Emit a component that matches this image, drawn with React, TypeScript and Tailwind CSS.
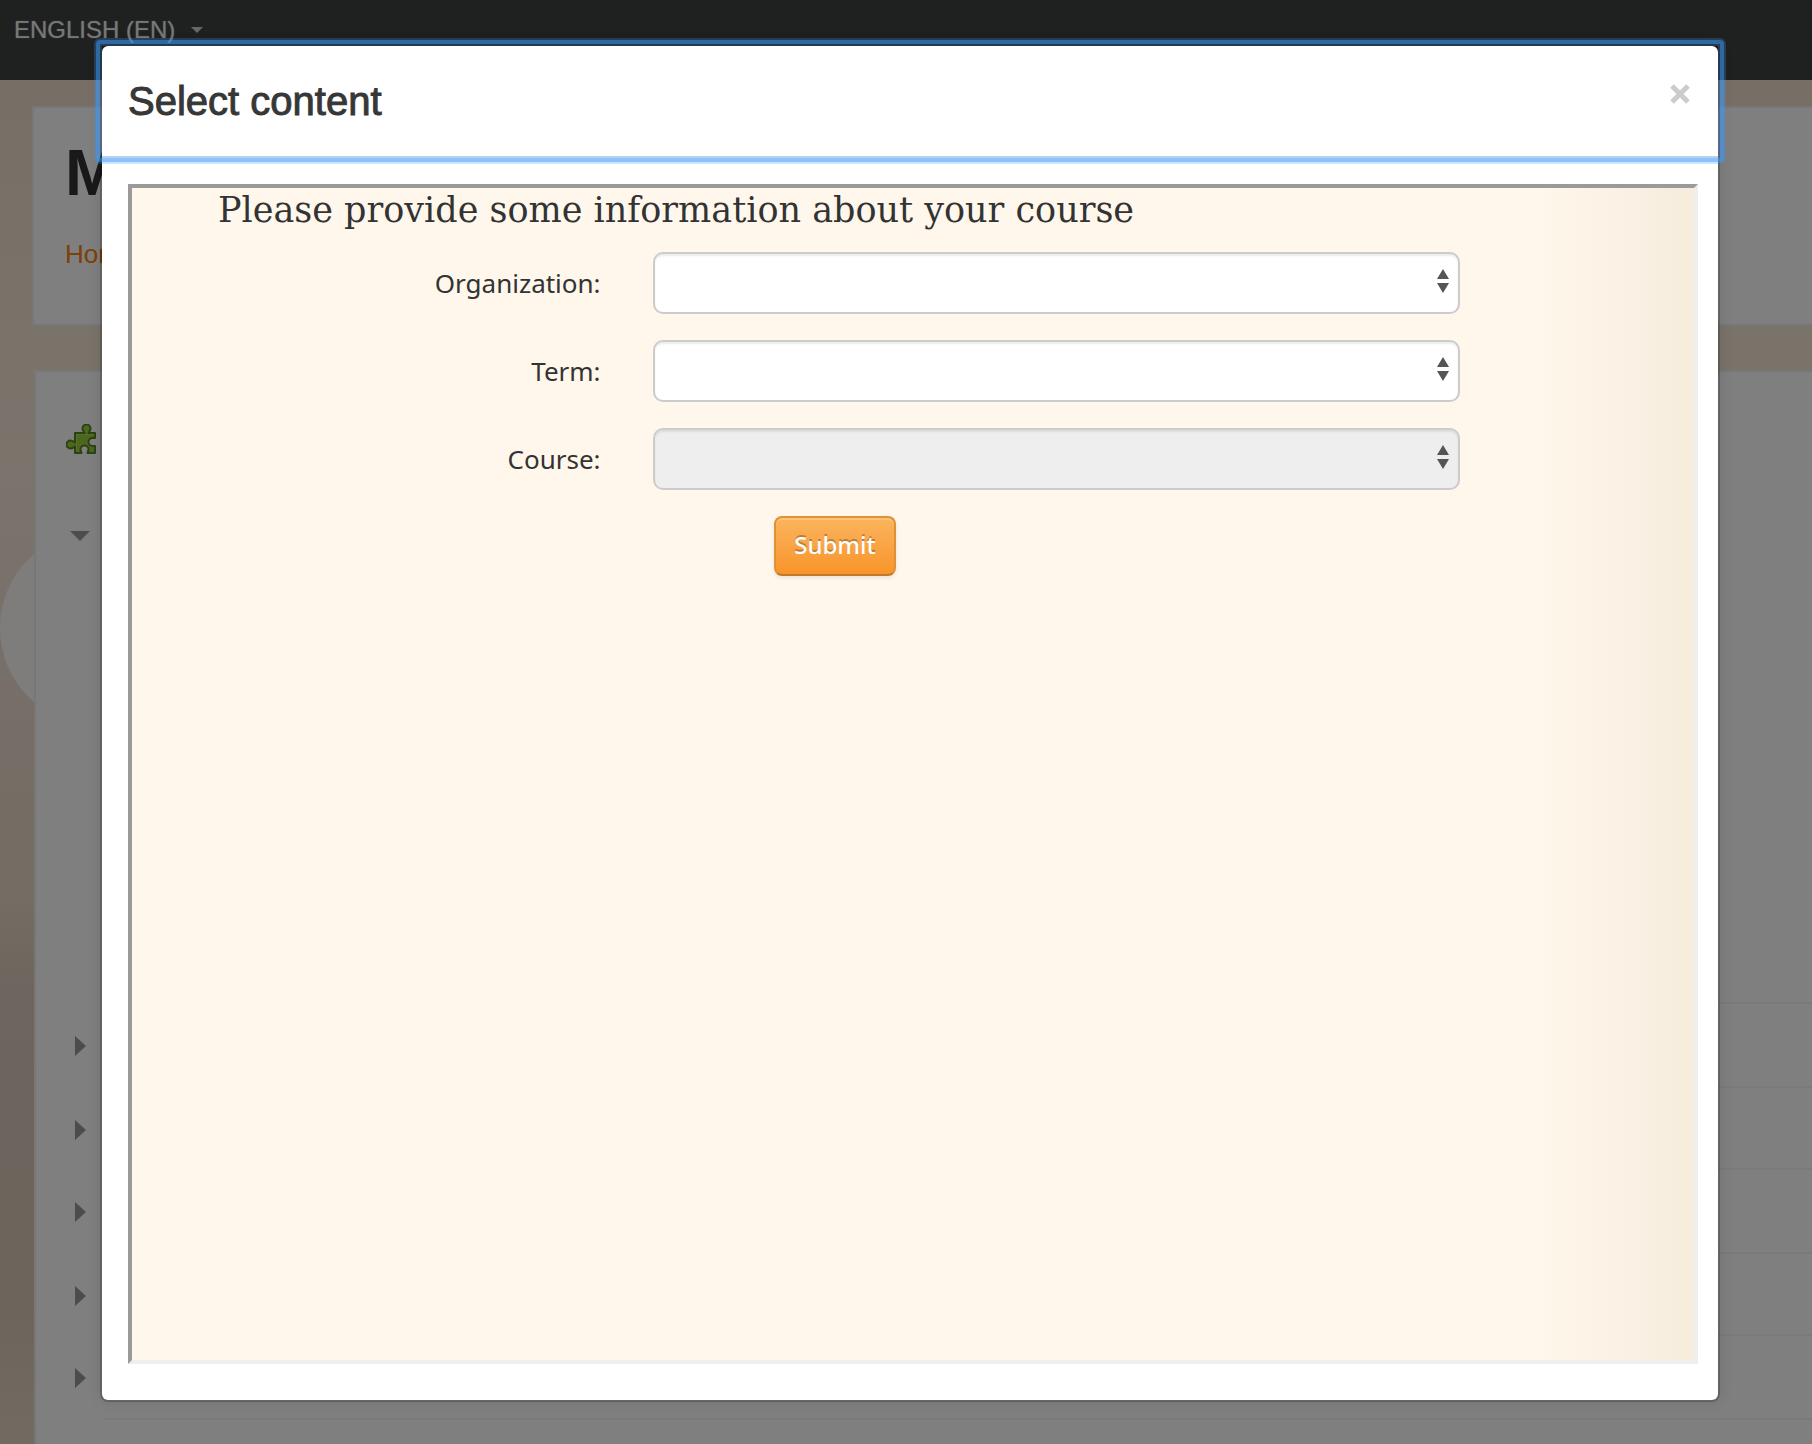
import React from "react";

const rowHeights = ["h-[84px]", "h-[82px]", "h-[84px]", "h-[82px]", "h-[84px]"];

function Puzzle() {
  return (
    <svg viewBox="0 0 30 30" className="block h-[30px] w-[30px]" aria-hidden="true">
      <path
        d="M9 9h9.500c0-1-2-2-2-4.500a4 4 0 0 1 8 0c0 2.500-2 3.500-2 4.500H29v5h-2.500a4 4 0 0 0 0 8H29v7h-7.500c0-1 1-2 1-3.500a4 4 0 0 0-8 0c0 1.500 1 2.500 1 3.500H9v-6.500c-1 0-2 2-4.500 2a4 4 0 0 1 0-8c2.500 0 3.500 2 4.500 2z"
        fill="#9cce3c"
        stroke="#588424"
        strokeWidth="2"
        strokeLinejoin="round"
      />
      <path d="M10.500 27.500V10.500h17" fill="none" stroke="#b4dc60" strokeWidth="1" />
    </svg>
  );
}

function SelectField({ id, label, disabled }: { id: string; label: string; disabled?: boolean }) {
  return (
    <div className="grid grid-cols-[30%_1fr_15%] items-center">
      <label htmlFor={id} className="text-right text-[26px] leading-8 text-[#333]">
        {label}
      </label>
      <div className="relative ml-[52px]">
        <select
          id={id}
          disabled={disabled}
          className="block h-[62px] w-full appearance-none rounded-[10px] border-2 border-[#ccc] bg-white px-3 opacity-100 shadow-[inset_0_2px_2px_rgba(0,0,0,0.075)] disabled:bg-[#eee]"
        />
        <svg viewBox="0 0 12 24" className="pointer-events-none absolute right-[11px] top-[17px] h-6 w-3" fill="#555" aria-hidden="true">
          <path d="M6 0l6 10H0zM0 14h12L6 24z" />
        </svg>
      </div>
    </div>
  );
}

export default function App() {
  return (
    <div className="relative min-h-screen overflow-hidden bg-[linear-gradient(180deg,#ecdcc8_0px,#f4e6d4_340px,#f6e8d8_480px,#ecdccc_760px,#e6dac6_900px,#dacabc_1000px,#dacab8_1300px,#e4d6c4_1444px)] font-['Liberation_Sans',Arial,sans-serif]">
      <div className="absolute left-0 top-[530px] size-[196px] rounded-full bg-[#fcfaf8]" />
      <nav className="relative h-20 bg-[#3e4240] px-[14px] pt-[14px]">
        <a href="#" className="flex items-center gap-4 text-[24px] leading-8 text-white/75 [text-shadow:0_0_1px_currentColor]">
          ENGLISH (EN)
          <svg viewBox="0 0 12 6" className="h-[6px] w-3" fill="currentColor" aria-hidden="true">
            <path d="M0 0h12L6 6z" />
          </svg>
        </a>
      </nav>
      <header className="relative ml-8 mt-[26px] h-[220px] border-2 border-r-0 border-[#eee] bg-white px-[31px] pt-[30px]">
        <h1 className="text-[65px] font-bold leading-[70px] text-[#333]">M</h1>
        <a href="#" className="mt-[30px] inline-block text-[26px] leading-8 text-[#f98012]">Home</a>
      </header>
      <main className="relative ml-[34px] mt-[44px] h-[1100px] border-2 border-r-0 border-[#eee] bg-white">
        <div className="ml-[30px] pt-[52px]">
          <Puzzle />
        </div>
        <svg viewBox="0 0 20 10" className="ml-[34px] mt-[77px] block h-[10px] w-5" fill="#999" aria-hidden="true">
          <path d="M0 0h20L10 10z" />
        </svg>
        <ul className="mt-[461px]">
          {rowHeights.map((height, i) => (
            <li key={i} className={`ml-[68px] border-t-2 border-[#f4f4f4] pt-8 ${height}`}>
              <svg viewBox="0 0 11 20" className="-ml-[29px] block h-5 w-[11px]" fill="#999" aria-hidden="true">
                <path d="M0 0l11 10L0 20z" />
              </svg>
            </li>
          ))}
          <li className="ml-[68px] border-t-2 border-[#f4f4f4]" />
        </ul>
      </main>

      <div className="absolute inset-0 bg-black/50">
        <div role="dialog" aria-labelledby="title" className="mb-[42px] ml-[100px] mr-[92px] mt-[44px] rounded-lg border-2 border-black/20 bg-white bg-clip-padding shadow-[0_0_14px_rgba(0,0,0,0.1)]">
          <div className="relative flex h-[110px] items-start justify-between px-[26px] pt-[31px]">
            <h2 id="title" className="text-[40px] leading-[48px] text-[#373737] [-webkit-text-stroke:1px_#373737]">Select content</h2>
            <button type="button" aria-label="Close" className="mr-[2px] mt-[7px] text-[#ccc]">
              <svg viewBox="0 0 20 20" className="block size-5" stroke="currentColor" strokeWidth="5" aria-hidden="true">
                <path d="M2 2l16 16M18 2L2 18" />
              </svg>
            </button>
            <div className="pointer-events-none absolute -inset-2 rounded-md border-2 border-[#3b99fc]/25">
              <div className="absolute inset-0 rounded border-4 border-[#3b99fc]/60" />
              <div className="absolute inset-1 border-2 border-[#3b79bc]/35" />
            </div>
          </div>
          <div className="pb-9 pl-[26px] pr-5 pt-7">
            <section className="h-[1180px] border-4 border-b-[#eee] border-l-[#9a9a9a] border-r-[#eee] border-t-[#9a9a9a] bg-[linear-gradient(90deg,#fff7eb_0%,#fff7eb_90%,#fdf3e7_93%,#faf0e4_96%,#f6eddd_99%,#f6eddd_100%)] font-['Noto_Sans','Open_Sans',sans-serif]">
              <h3 className="ml-[86px] text-[35px] leading-[44px] text-[#333] font-['DejaVu_Serif',serif]">
                Please provide some information about your course
              </h3>
              <form className="mt-5 flex flex-col gap-[26px]">
                <SelectField id="org" label="Organization:" />
                <SelectField id="term" label="Term:" />
                <SelectField id="course" label="Course:" disabled />
                <button
                  type="button"
                  className="ml-[642px] h-[60px] w-[122px] rounded-lg border-2 border-[#de9235] border-b-[#c17a2b] bg-linear-to-b from-[#fbb45c] to-[#f89428] pb-[2px] text-[24px] font-medium text-white shadow-[inset_0_2px_0_rgba(255,255,255,0.2),0_2px_4px_rgba(0,0,0,0.08)] [text-shadow:0_-2px_0_rgba(0,0,0,0.25)]"
                >
                  Submit
                </button>
              </form>
            </section>
          </div>
        </div>
      </div>
    </div>
  );
}
